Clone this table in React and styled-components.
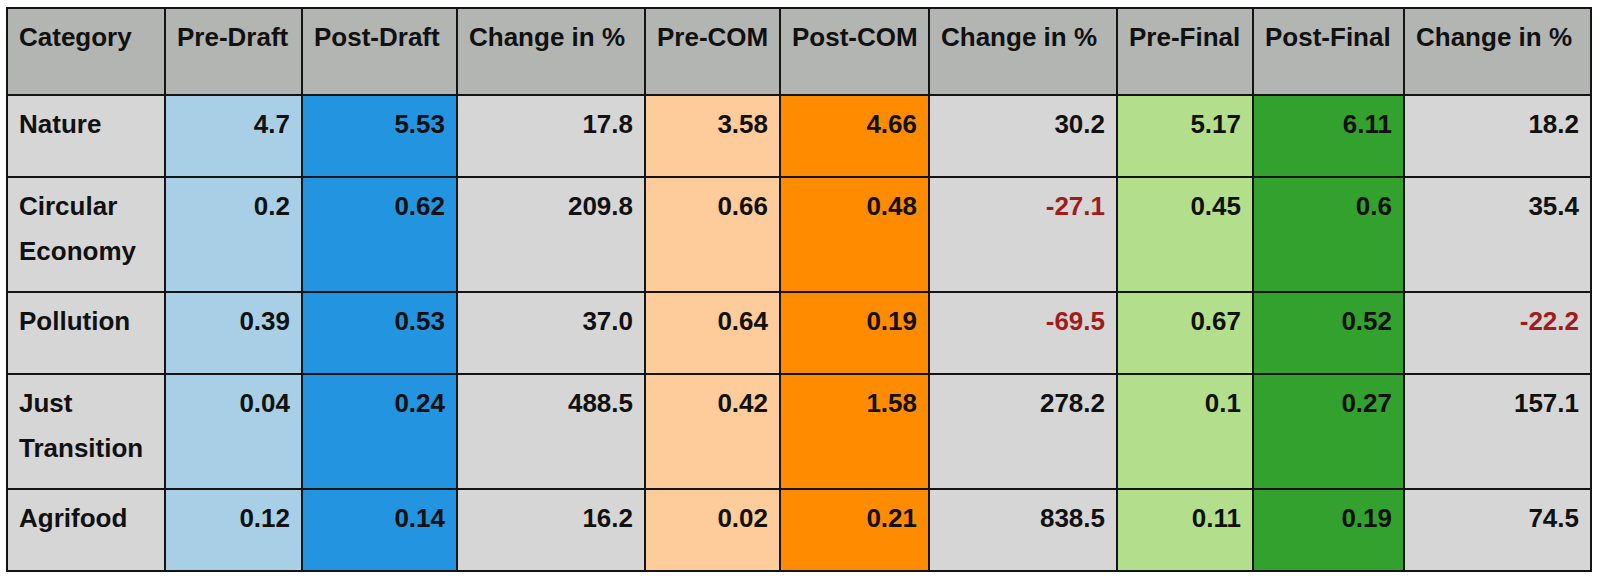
import React from "react";
import styled, { createGlobalStyle } from "styled-components";

const GlobalStyle = createGlobalStyle`
  body {
    margin: 0;
    background: #ffffff;
    font-family: "Liberation Sans", Arial, sans-serif;
  }
`;

const tones = {
  gray: "#d6d6d6",
  preDraft: "#a8cfe5",
  postDraft: "#2394df",
  preCom: "#fecb9b",
  postCom: "#ff8b01",
  preFinal: "#b3df8c",
  postFinal: "#33a12e",
};

const columns = [
  { title: "Category", width: 158, tone: "gray" },
  { title: "Pre-Draft", width: 137, tone: "preDraft" },
  { title: "Post-Draft", width: 155, tone: "postDraft" },
  { title: "Change in %", width: 188, tone: "gray" },
  { title: "Pre-COM", width: 135, tone: "preCom" },
  { title: "Post-COM", width: 149, tone: "postCom" },
  { title: "Change in %", width: 188, tone: "gray" },
  { title: "Pre-Final", width: 136, tone: "preFinal" },
  { title: "Post-Final", width: 151, tone: "postFinal" },
  { title: "Change in %", width: 187, tone: "gray" },
];

const rows = [
  ["Nature", "4.7", "5.53", "17.8", "3.58", "4.66", "30.2", "5.17", "6.11", "18.2"],
  ["Circular Economy", "0.2", "0.62", "209.8", "0.66", "0.48", "-27.1", "0.45", "0.6", "35.4"],
  ["Pollution", "0.39", "0.53", "37.0", "0.64", "0.19", "-69.5", "0.67", "0.52", "-22.2"],
  ["Just Transition", "0.04", "0.24", "488.5", "0.42", "1.58", "278.2", "0.1", "0.27", "157.1"],
  ["Agrifood", "0.12", "0.14", "16.2", "0.02", "0.21", "838.5", "0.11", "0.19", "74.5"],
];

const Page = styled.div`
  padding: 7px 0 0 6px;
`;

const Table = styled.table`
  border-collapse: collapse;
  table-layout: fixed;
  width: 1586px;
  border: 2px solid #141414;
  font-size: 26px;
  font-weight: bold;
  color: #111111;
`;

const HeadCell = styled.th`
  background: #b3b5b3;
  border: 2px solid #141414;
  height: 64px;
  padding: 6px 11px 15px;
  line-height: 45px;
  text-align: left;
  vertical-align: top;
  font-weight: bold;
  white-space: nowrap;
`;

const Cell = styled.td`
  background: ${({ $tone }) => tones[$tone]};
  border: 2px solid #141414;
  height: 57px;
  padding: 6px 11px 17px;
  line-height: 45px;
  vertical-align: top;
  text-align: ${({ $label }) => ($label ? "left" : "right")};
  color: ${({ $negative }) => ($negative ? "#a01c1c" : "#111111")};
`;

const App = () => {
  return (
    <Page>
      <GlobalStyle />
      <Table>
        <colgroup>
          {columns.map((col, i) => (
            <col key={i} style={{ width: col.width }} />
          ))}
        </colgroup>
        <thead>
          <tr>
            {columns.map((col, i) => (
              <HeadCell key={i}>{col.title}</HeadCell>
            ))}
          </tr>
        </thead>
        <tbody>
          {rows.map((row) => (
            <tr key={row[0]}>
              {row.map((value, i) => (
                <Cell
                  key={i}
                  $tone={columns[i].tone}
                  $label={i === 0}
                  $negative={value.startsWith("-")}
                >
                  {value}
                </Cell>
              ))}
            </tr>
          ))}
        </tbody>
      </Table>
    </Page>
  );
};

export default App;
